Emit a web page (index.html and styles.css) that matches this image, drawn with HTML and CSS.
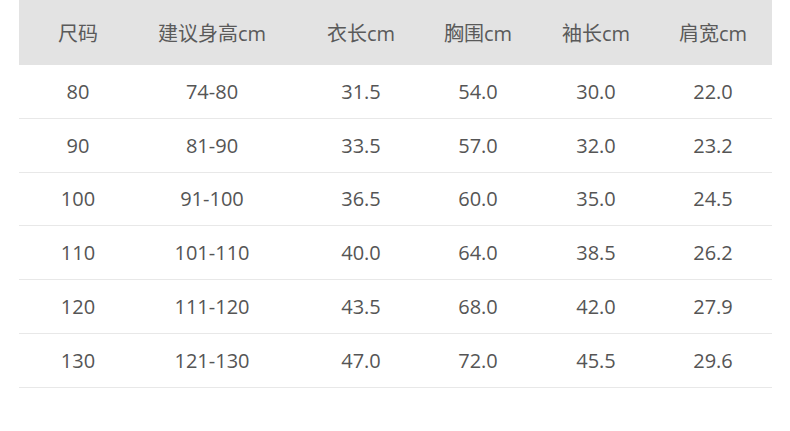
FILE: index.html
```html
<!DOCTYPE html>
<html lang="zh">
<head>
<meta charset="utf-8">
<link rel="stylesheet" href="styles.css">
</head>
<body>
<div class="table">
  <div class="row head">
    <div>尺码</div><div>建议身高cm</div><div>衣长cm</div><div>胸围cm</div><div>袖长cm</div><div>肩宽cm</div>
  </div>
  <div class="row"><div>80</div><div>74-80</div><div>31.5</div><div>54.0</div><div>30.0</div><div>22.0</div></div>
  <div class="row"><div>90</div><div>81-90</div><div>33.5</div><div>57.0</div><div>32.0</div><div>23.2</div></div>
  <div class="row"><div>100</div><div>91-100</div><div>36.5</div><div>60.0</div><div>35.0</div><div>24.5</div></div>
  <div class="row"><div>110</div><div>101-110</div><div>40.0</div><div>64.0</div><div>38.5</div><div>26.2</div></div>
  <div class="row"><div>120</div><div>111-120</div><div>43.5</div><div>68.0</div><div>42.0</div><div>27.9</div></div>
  <div class="row"><div>130</div><div>121-130</div><div>47.0</div><div>72.0</div><div>45.5</div><div>29.6</div></div>
</div>
</body>
</html>
```
FILE: styles.css
```css
html, body {
  margin: 0;
  padding: 0;
  background: #ffffff;
}
body {
  font-family: "Open Sans", "Noto Sans CJK SC", sans-serif;
  color: #555555;
}
.table {
  margin-left: 19px;
  width: 753px;
}
.row {
  display: grid;
  grid-template-columns: 118px 150px 148px 86px 150px 84px;
  padding-right: 17px;
  height: 53.8px;
  box-sizing: border-box;
  border-bottom: 1px solid #e8e8e8;
  align-items: center;
  font-size: 20px;
}
.row > div {
  text-align: center;
  white-space: nowrap;
}
.head {
  height: 65px;
  background: #e3e3e3;
  border-bottom: none;
  color: #5a5a5a;
  font-size: 20px;
}
```
